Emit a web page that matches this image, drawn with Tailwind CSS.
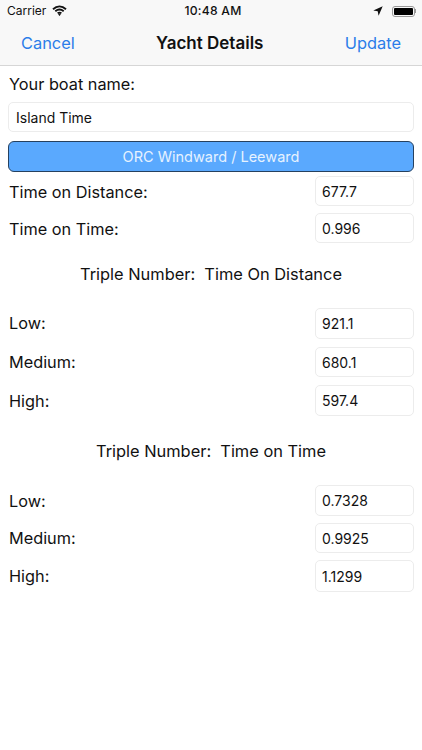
<!DOCTYPE html>
<html lang="en">
<head>
  <meta charset="UTF-8" />
  <title>Yacht Details</title>
  <script src="https://cdn.jsdelivr.net/npm/@tailwindcss/browser@4"></script>
</head>
<body class="bg-white text-black font-['Inter',sans-serif] w-[422px] h-[750px] overflow-hidden">

  <!-- Status + nav bar -->
  <header class="bg-[#f8f8f8] border-b border-[#d6d6d6] h-[66px]">
    <div class="h-[22px] relative flex items-center justify-between pl-[7px] pr-[6px] text-[12px] text-[#111]">
      <div class="flex items-center gap-[6px]">
        <span>Carrier</span>
        <svg width="15" height="11" viewBox="0 0 15 11" fill="none" stroke="#111" stroke-width="1.9" class="mb-[2px]">
          <path d="M1 4.2C5 .6 10 .6 14 4.2" />
          <path d="M3.3 6.3c2.7-2.2 5.7-2.2 8.4 0" />
          <path d="M5.6 8.3c1.3-.9 2.5-.9 3.8 0" />
          <circle cx="7.5" cy="9.6" r=".7" fill="#111" stroke-width="1" />
        </svg>
      </div>
      <span class="absolute left-0 right-0 pl-[4px] text-center text-[12.2px] font-medium tracking-[.2px]">10:48 AM</span>
      <div class="flex items-center gap-[9px]">
        <svg width="10" height="10" viewBox="0 0 10 10" fill="#111"><path d="M9.7.3.3 4.4l4.4.8.9 4.5z" /></svg>
        <div class="flex items-center">
          <div class="w-[23px] h-[11px] border border-[#999] rounded-[3px] p-[1px]">
            <div class="w-full h-full bg-black rounded-[1px]"></div>
          </div>
          <div class="w-[1px] h-[4px] bg-[#999]"></div>
        </div>
      </div>
    </div>
    <div class="h-[43px] flex items-center justify-between px-[21px] text-[16.4px]">
      <span class="text-[#2b7de9]">Cancel</span>
      <span class="font-semibold text-[17px] text-[#111]">Yacht Details</span>
      <span class="text-[#2b7de9]">Update</span>
    </div>
  </header>

  <main class="px-[8px] text-[16.3px] text-[#111]">
    <p class="h-[36px] leading-[37px] pl-[1px]">Your boat name:</p>
    <div class="h-[30px] border border-[#ececec] rounded-[5px] flex items-center pl-[7px] text-[14px]">Island Time</div>

    <div class="mt-[9px] h-[31px] rounded-[6px] border border-[#26415f] bg-[#5aa9fe] text-[#e6f2ff] text-[14.5px] flex items-center justify-center">ORC Windward / Leeward</div>

    <div class="mt-[4px] flex flex-col gap-[7px]">
      <div class="flex items-center justify-between pl-[1px]">
        <span class="pt-[2px]">Time on Distance:</span>
        <div class="w-[99px] h-[30px] border border-[#ececec] rounded-[5px] flex items-center pl-[6px] text-[14px]">677.7</div>
      </div>
      <div class="flex items-center justify-between pl-[1px]">
        <span class="pt-[2px]">Time on Time:</span>
        <div class="w-[99px] h-[30px] border border-[#ececec] rounded-[5px] flex items-center pl-[6px] text-[14px]">0.996</div>
      </div>
    </div>

    <p class="mt-[18px] h-[27px] leading-[27px] text-center text-[16.4px]">Triple Number:&nbsp; Time On Distance</p>

    <div class="mt-[20px] flex flex-col gap-[8px]">
      <div class="flex items-center justify-between pl-[1px]">
        <span>Low:</span>
        <div class="w-[99px] h-[31px] border border-[#ececec] rounded-[5px] flex items-center pl-[6px] text-[14px]">921.1</div>
      </div>
      <div class="flex items-center justify-between pl-[1px]">
        <span class="pt-[1px]">Medium:</span>
        <div class="w-[99px] h-[30px] border border-[#ececec] rounded-[5px] flex items-center pl-[6px] text-[14px]">680.1</div>
      </div>
      <div class="flex items-center justify-between pl-[1px]">
        <span class="pt-[2px]">High:</span>
        <div class="w-[99px] h-[31px] border border-[#ececec] rounded-[5px] flex items-center pl-[6px] text-[14px]">597.4</div>
      </div>
    </div>

    <p class="mt-[22px] h-[27px] leading-[27px] text-center text-[16.4px]">Triple Number:&nbsp; Time on Time</p>

    <div class="mt-[20px] flex flex-col gap-[7px]">
      <div class="flex items-center justify-between pl-[1px]">
        <span class="pt-[1px]">Low:</span>
        <div class="w-[99px] h-[31px] border border-[#ececec] rounded-[5px] flex items-center pl-[6px] text-[14px]">0.7328</div>
      </div>
      <div class="flex items-center justify-between pl-[1px]">
        <span class="pt-[1px]">Medium:</span>
        <div class="w-[99px] h-[30px] border border-[#ececec] rounded-[5px] flex items-center pl-[6px] text-[14px]">0.9925</div>
      </div>
      <div class="flex items-center justify-between pl-[1px]">
        <span>High:</span>
        <div class="w-[99px] h-[32px] border border-[#ececec] rounded-[5px] flex items-center pl-[6px] text-[14px]">1.1299</div>
      </div>
    </div>
  </main>

</body>
</html>
